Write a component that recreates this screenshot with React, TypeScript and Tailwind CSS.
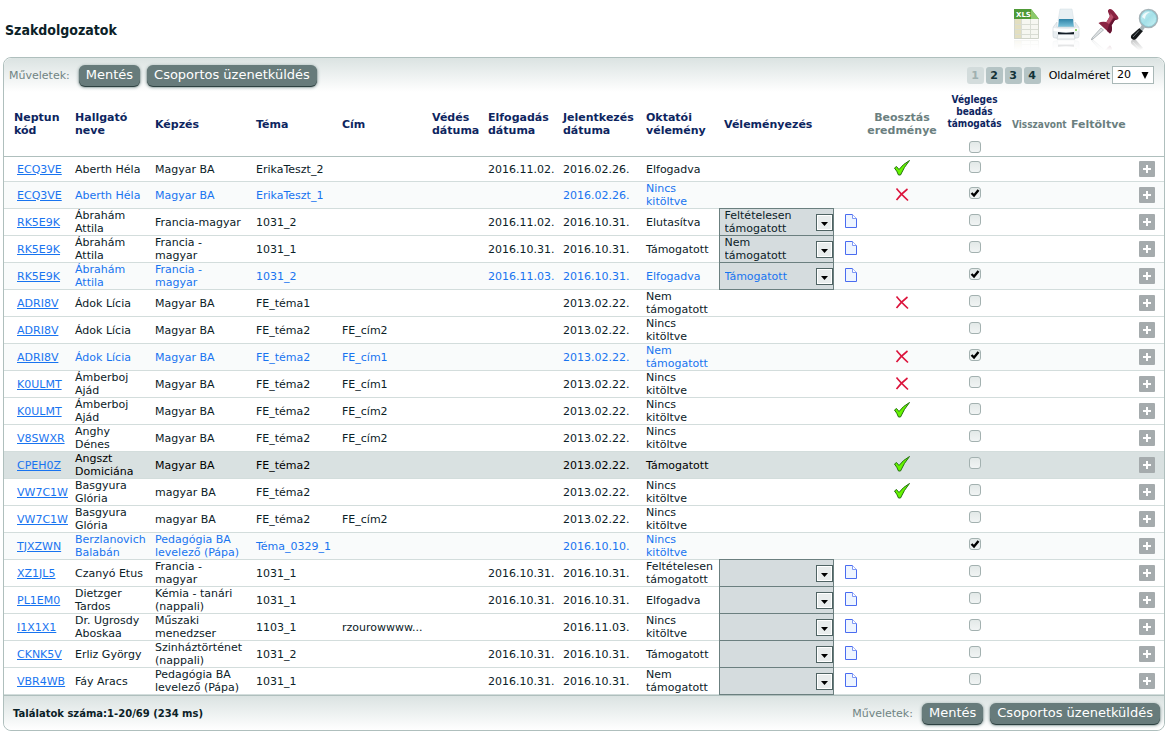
import React from 'react';

type Result = 'ok' | 'no' | '';

type Thesis = {
  code: string;
  name: string;
  training: string;
  topic: string;
  title?: string;
  accepted?: string;
  applied: string;
  opinion: string;
  review?: string; // undefined: not reviewable, '': nothing chosen yet
  result?: Result;
  supported?: boolean;
  hovered?: boolean;
};

const THESES: Thesis[] = [
  { code: 'ECQ3VE', name: 'Aberth Héla', training: 'Magyar BA', topic: 'ErikaTeszt_2', accepted: '2016.11.02.', applied: '2016.02.26.', opinion: 'Elfogadva', result: 'ok' },
  { code: 'ECQ3VE', name: 'Aberth Héla', training: 'Magyar BA', topic: 'ErikaTeszt_1', applied: '2016.02.26.', opinion: 'Nincs\nkitöltve', result: 'no', supported: true },
  { code: 'RK5E9K', name: 'Ábrahám\nAttila', training: 'Francia-magyar', topic: '1031_2', accepted: '2016.11.02.', applied: '2016.10.31.', opinion: 'Elutasítva', review: 'Feltételesen támogatott' },
  { code: 'RK5E9K', name: 'Ábrahám\nAttila', training: 'Francia -\nmagyar', topic: '1031_1', accepted: '2016.10.31.', applied: '2016.10.31.', opinion: 'Támogatott', review: 'Nem támogatott' },
  { code: 'RK5E9K', name: 'Ábrahám\nAttila', training: 'Francia -\nmagyar', topic: '1031_2', accepted: '2016.11.03.', applied: '2016.10.31.', opinion: 'Elfogadva', review: 'Támogatott', supported: true },
  { code: 'ADRI8V', name: 'Ádok Lícia', training: 'Magyar BA', topic: 'FE_téma1', applied: '2013.02.22.', opinion: 'Nem\ntámogatott', result: 'no' },
  { code: 'ADRI8V', name: 'Ádok Lícia', training: 'Magyar BA', topic: 'FE_téma2', title: 'FE_cím2', applied: '2013.02.22.', opinion: 'Nincs\nkitöltve' },
  { code: 'ADRI8V', name: 'Ádok Lícia', training: 'Magyar BA', topic: 'FE_téma2', title: 'FE_cím1', applied: '2013.02.22.', opinion: 'Nem\ntámogatott', result: 'no', supported: true },
  { code: 'K0ULMT', name: 'Ámberboj\nAjád', training: 'Magyar BA', topic: 'FE_téma2', title: 'FE_cím1', applied: '2013.02.22.', opinion: 'Nincs\nkitöltve', result: 'no' },
  { code: 'K0ULMT', name: 'Ámberboj\nAjád', training: 'Magyar BA', topic: 'FE_téma2', title: 'FE_cím2', applied: '2013.02.22.', opinion: 'Nincs\nkitöltve', result: 'ok' },
  { code: 'V8SWXR', name: 'Anghy\nDénes', training: 'Magyar BA', topic: 'FE_téma2', title: 'FE_cím2', applied: '2013.02.22.', opinion: 'Nincs\nkitöltve' },
  { code: 'CPEH0Z', name: 'Angszt\nDomiciána', training: 'Magyar BA', topic: 'FE_téma2', applied: '2013.02.22.', opinion: 'Támogatott', result: 'ok', hovered: true },
  { code: 'VW7C1W', name: 'Basgyura\nGlória', training: 'magyar BA', topic: 'FE_téma2', applied: '2013.02.22.', opinion: 'Nincs\nkitöltve', result: 'ok' },
  { code: 'VW7C1W', name: 'Basgyura\nGlória', training: 'magyar BA', topic: 'FE_téma2', title: 'FE_cím2', applied: '2013.02.22.', opinion: 'Nincs\nkitöltve' },
  { code: 'TJXZWN', name: 'Berzlanovich\nBalabán', training: 'Pedagógia BA\nlevelező (Pápa)', topic: 'Téma_0329_1', applied: '2016.10.10.', opinion: 'Nincs\nkitöltve', supported: true },
  { code: 'XZ1JL5', name: 'Czanyó Etus', training: 'Francia -\nmagyar', topic: '1031_1', accepted: '2016.10.31.', applied: '2016.10.31.', opinion: 'Feltételesen\ntámogatott', review: '' },
  { code: 'PL1EM0', name: 'Dietzger\nTardos', training: 'Kémia - tanári\n(nappali)', topic: '1031_1', accepted: '2016.10.31.', applied: '2016.10.31.', opinion: 'Elfogadva', review: '' },
  { code: 'I1X1X1', name: 'Dr. Ugrosdy\nAboskaa', training: 'Műszaki\nmenedzser', topic: '1103_1', title: 'rzourowwww...', applied: '2016.11.03.', opinion: 'Nincs\nkitöltve', review: '' },
  { code: 'CKNK5V', name: 'Erliz György', training: 'Szinháztörténet\n(nappali)', topic: '1031_2', accepted: '2016.10.31.', applied: '2016.10.31.', opinion: 'Támogatott', review: '' },
  { code: 'VBR4WB', name: 'Fáy Aracs', training: 'Pedagógia BA\nlevelező (Pápa)', topic: '1031_1', accepted: '2016.10.31.', applied: '2016.10.31.', opinion: 'Nem\ntámogatott', review: '' },
];

const REVIEW_OPTIONS = ['', 'Támogatott', 'Feltételesen támogatott', 'Nem támogatott'];

const XlsArt = () => (
  <>
    <path d="M1 1h17l8 10v20H1z" fill="#f6f7f1" />
    <path d="M1 11h7.500v20H1z" fill="#e3dfc0" />
    <path d="M1 1h17l8 10H1z" fill="#4f9a37" />
    <path d="M18 1l8 10H18z" fill="#8cc96a" />
    <path d="M1 16.500h25M1 21.500h25M1 26.500h25M8.500 11v20M17.500 11v20" stroke="#d9ddd4" fill="none" />
    <path d="M1.500 11v19.500h24V11" stroke="#d0d4ca" fill="none" />
  </>
);

const PrinterArt = () => (
  <>
    <path d="M8 1h12l2 12H6z" fill="#e8eff3" stroke="#d3dde2" strokeWidth=".5" />
    <path d="M7 11h14l1 8H6z" fill="url(#blueSheet)" />
    <path d="M5 14l-3 4q-1 1-1 3v7q0 2 2 2h22q2 0 2-2v-7q0-2-1-3l-3-4v5H5z" fill="#e9eef1" stroke="#c9d2d7" strokeWidth=".6" />
    <path d="M1.500 20q12.500 2 25 0v3q-12.500 2-25 0z" fill="#fff" />
    <path d="M6 24q8 1.500 16 0v3H6z" fill="#141d26" />
    <path d="M6 26.500h16l1 4.500H5z" fill="#f9fbfc" stroke="#bcc6cb" strokeWidth=".5" />
    <circle cx="24" cy="22" r="1" fill="#6fc23e" />
  </>
);

const PinArt = () => (
  <>
    <path d="M10 20l2.500 2L2 31 .5 31.500 1 30z" fill="#dfe3e5" stroke="#8d9599" strokeWidth=".6" />
    <path d="M18.500 1q2-.5 4 2l4 5q2 3 0 3.500-2 0-3 1l-3 5q1.500 5-1.500 8L7.500 15q3-2 8-1l3-5q.5-1-1-4t1-4z" fill="#8a2342" />
    <path d="M19.500 5l3 4-4.500 7-3.500-2h1l3.500-6q.5-1 .5-3z" fill="#b8506b" />
    <path d="M26.500 11.500q-2 0-3 1l-3 5q1.500 5-1.500 8l-3-2.500 2-6 5-7z" fill="#641431" />
  </>
);

const MagnifierArt = () => (
  <>
    <path d="M9.500 20l3.500 3-7 8q-2 1.500-4 0t-.5-4z" fill="#15181a" />
    <path d="M9 22.500l-6 6.500" stroke="#70787c" strokeWidth="1" />
    <path d="M12 17l3 2.500-2.500 3.500-3-2.500z" fill="#a9b4b8" />
    <circle cx="18.500" cy="10.500" r="9" fill="url(#lens)" stroke="#a5b3b8" strokeWidth="1.500" />
    <circle cx="18.500" cy="10.500" r="8" fill="none" stroke="#6fbfcc" strokeWidth=".5" />
    <path d="M12 9q2-5 8-5-5 2-5 7z" fill="#fff" opacity=".8" />
  </>
);

type ToolButtonProps = { label: string; tag?: string; children: React.ReactNode };

// Draws an icon and its fading mirror image underneath
const ToolButton = ({ label, tag, children }: ToolButtonProps) => (
  <button type="button" aria-label={label} className="cursor-pointer">
    <svg width="30" height="44" viewBox="0 0 30 44" className="block">
      <defs>
        <linearGradient id="blueSheet" x1="0" y1="0" x2="0" y2="1">
          <stop offset="0" stopColor="#2f83a8" />
          <stop offset="1" stopColor="#7cc4dc" />
        </linearGradient>
        <linearGradient id="lens" x1="0" y1="0" x2="1" y2="1">
          <stop offset="0" stopColor="#d5f3f7" />
          <stop offset=".5" stopColor="#a4e0e8" />
          <stop offset="1" stopColor="#d0f5f6" />
        </linearGradient>
        <linearGradient id="fade" x1="0" y1="0" x2="0" y2="1">
          <stop offset="0" stopColor="#fff" stopOpacity=".75" />
          <stop offset="1" stopColor="#fff" />
        </linearGradient>
      </defs>
      <g transform="translate(0 63) scale(1 -1)">{children}</g>
      <rect y="31.500" width="30" height="11" fill="url(#fade)" />
      <rect y="42" width="30" height="2" fill="#fff" />
      {children}
      {tag && (
        <text x="3" y="9" fontSize="7" fontWeight="700" fill="#fff">{tag}</text>
      )}
    </svg>
  </button>
);

const ActionButton = ({ children }: { children: string }) => (
  <button
    type="button"
    className="h-[21px] cursor-pointer rounded-md bg-[#677b7b] px-[7px] text-[13px] leading-5 text-white shadow-[0_1px_1px_#1f3333,0_1px_3px_1px_#a9b8b7]"
  >
    {children}
  </button>
);

const Actions = () => (
  <div className="flex items-center gap-[7px]">
    <span className="mr-[2px] text-[11px] text-[#708483]">Műveletek:</span>
    <ActionButton>Mentés</ActionButton>
    <ActionButton>Csoportos üzenetküldés</ActionButton>
  </div>
);

const CheckBox = ({ label, checked = false }: { label: string; checked?: boolean }) => (
  <span className="inline-grid align-top">
    <input
      type="checkbox"
      aria-label={label}
      defaultChecked={checked}
      className="peer size-3 appearance-none rounded-[3px] border border-[#a3b1b0] bg-linear-to-b from-[#e3e9e8] to-[#f1f4f4] [grid-area:1/1]"
    />
    <svg width="12" height="12" viewBox="0 0 12 12" className="pointer-events-none hidden [grid-area:1/1] peer-checked:block">
      <path d="M2.500 6l2.500 2.500 4.500-5.500" stroke="#000" strokeWidth="2.400" fill="none" />
    </svg>
  </span>
);

const ResultIcon = ({ result }: { result?: Result }) => {
  if (result === 'ok') {
    return (
      <svg width="18" height="18" viewBox="0 0 18 18" role="img" aria-label="Elfogadva" className="mx-auto block">
        <path d="M1.500 9l2-1.500L6 10.500Q10 5 16.500 1.500 11 8 7.500 16H5.500Q4 12 1.500 9z" fill="#66f500" stroke="#24730f" />
      </svg>
    );
  }
  if (result === 'no') {
    return (
      <svg width="18" height="18" viewBox="0 0 18 18" role="img" aria-label="Elutasítva" className="mx-auto block">
        <path d="M3.500 3.500Q7 8 15 15.500M14.500 4Q8 9 3.500 15" stroke="#dc143c" strokeWidth="1.600" fill="none" />
      </svg>
    );
  }
  return null;
};

const ReviewSelect = ({ code, value }: { code: string; value: string }) => (
  <div className="relative">
    <select
      aria-label={`Véleményezés ${code}`}
      defaultValue={value}
      className="block h-[26px] w-full appearance-none whitespace-normal bg-[#d5dcde] pl-[5px] pr-6 text-[11px] leading-[13px]"
    >
      {REVIEW_OPTIONS.map((o) => (
        <option key={o}>{o}</option>
      ))}
    </select>
    <svg width="17" height="17" viewBox="0 0 17 17" className="pointer-events-none absolute right-0 bottom-1">
      <rect x=".5" y=".5" width="16" height="16" fill="#fff" stroke="#4f6363" />
      <rect x="2" y="2" width="13" height="13" fill="#e9eded" />
      <path d="M5 8h7l-3.500 4z" fill="#000" />
    </svg>
  </div>
);

const DocIcon = () => (
  <svg width="12" height="14" viewBox="0 0 12 14">
    <path d="M.5.5h7l4 4v9H.5z" fill="#eef5ff" stroke="#4a6cf0" />
    <path d="M7.500.5v4h4" fill="#fff" stroke="#7d97f5" />
  </svg>
);

const PlusIcon = () => (
  <svg width="16" height="16" viewBox="0 0 16 16" className="block">
    <rect width="16" height="16" rx="1" fill="#a5abad" />
    <path d="M8 4v8M4 8h8" stroke="#fff" strokeWidth="2" />
  </svg>
);

const ThesisRow = ({ row }: { row: Thesis }) => {
  let tone = 'text-[#0b2127]';
  if (row.hovered) tone = 'bg-[#d9e1e1] text-black';
  else if (row.supported) tone = 'bg-[#f9fbfb] text-[#1874f0]';

  return (
    <tr className={`h-[27px] border-b border-[#d3dddc] whitespace-pre first:h-[25px] ${tone}`}>
      <td className="pl-[13px]">
        <a href="#" className="text-[#1874f0] underline">{row.code}</a>
      </td>
      <td className="pl-[3px]">{row.name}</td>
      <td className="pl-[3px]">{row.training}</td>
      <td className="pl-[3px]">{row.topic}</td>
      <td className="pl-[3px]">{row.title}</td>
      <td />
      <td className="pl-[3px]">{row.accepted}</td>
      <td className="pl-[3px]">{row.applied}</td>
      <td className="pl-[3px]">{row.opinion}</td>
      {row.review === undefined ? (
        <td />
      ) : (
        <td className="border border-[#6b7f7f]">
          <ReviewSelect code={row.code} value={row.review} />
        </td>
      )}
      <td className="pb-[2px] pl-[11px]">
        {row.review !== undefined && (
          <button type="button" aria-label="Dokumentum" className="block cursor-pointer">
            <DocIcon />
          </button>
        )}
      </td>
      <td className="pb-[2px]">
        <ResultIcon result={row.result} />
      </td>
      <td className="pb-[3px] text-center">
        <CheckBox label={`Végleges beadás támogatás ${row.code}`} checked={row.supported} />
      </td>
      <td />
      <td />
      <td className="pl-px">
        <button type="button" aria-label="Lehetőségek" className="block cursor-pointer">
          <PlusIcon />
        </button>
      </td>
    </tr>
  );
};

const Pager = () => (
  <div className="flex items-center">
    <nav className="flex gap-[2px] text-center text-[11px] leading-[17px] font-bold text-[#123138]">
      <span className="w-[17px] rounded-[3px] bg-[#d3dcdc] text-[#9fb0b0]">1</span>
      {[2, 3, 4].map((n) => (
        <a key={n} href="#" className="w-[17px] rounded-[3px] bg-[#b5c4c5]">{n}</a>
      ))}
    </nav>
    <label htmlFor="pageSize" className="mr-[2px] ml-2 text-[11px] text-black">Oldalméret</label>
    <span className="relative">
      <select id="pageSize" className="block h-[18px] w-[42px] appearance-none border border-[#a9b8b7] bg-white pl-1 text-[11px] leading-4 text-black">
        <option>20</option>
        <option>50</option>
        <option>100</option>
      </select>
      <svg width="8" height="7" viewBox="0 0 8 7" className="pointer-events-none absolute top-[6px] right-[5px]">
        <path d="M.5 0h7L4 7z" fill="#000" />
      </svg>
    </span>
  </div>
);

export default function App() {
  return (
    <main className="bg-white pr-px pb-1 pl-[3px] font-['DejaVu_Sans',Verdana,sans-serif] text-[11px] leading-[13px] text-[#0b2127]">
      <header className="flex h-[57px] justify-between pt-2 pr-[5px] pl-[2px]">
        <h1 className="pt-3 font-['DejaVu_Sans_Condensed','DejaVu_Sans',sans-serif] text-[14px] leading-5 font-bold">Szakdolgozatok</h1>
        <div className="flex items-start gap-[9px]">
          <ToolButton label="Exportálás Excelbe" tag="XLS"><XlsArt /></ToolButton>
          <ToolButton label="Nyomtatás"><PrinterArt /></ToolButton>
          <ToolButton label="Rögzítés"><PinArt /></ToolButton>
          <ToolButton label="Keresés"><MagnifierArt /></ToolButton>
        </div>
      </header>

      <section className="rounded-lg border border-[#afbfbd] bg-white">
        <div className="flex h-[34px] items-center justify-between rounded-t-lg bg-linear-to-b from-[#dbe3e2] to-white pr-[10px] pl-[5px]">
          <Actions />
          <Pager />
        </div>

        <table className="w-full table-fixed border-collapse">
          <colgroup>
            <col className="w-[68px]" />
            <col className="w-[80px]" />
            <col className="w-[101px]" />
            <col className="w-[86px]" />
            <col className="w-[90px]" />
            <col className="w-[56px]" />
            <col className="w-[75px]" />
            <col className="w-[83px]" />
            <col className="w-[76px]" />
            <col className="w-[114px]" />
            <col className="w-[34px]" />
            <col className="w-[70px]" />
            <col className="w-[75px]" />
            <col className="w-[58px]" />
            <col className="w-[68px]" />
            <col />
          </colgroup>
          <thead>
            <tr className="h-[64px] border-b border-[#afbfbd] text-left whitespace-pre text-[#0d2560]">
              <th className="pl-[10px]">{'Neptun\nkód'}</th>
              <th className="pl-[3px]">{'Hallgató\nneve'}</th>
              <th className="pl-[3px]">Képzés</th>
              <th className="pl-[3px]">Téma</th>
              <th className="pl-[3px]">Cím</th>
              <th className="pl-[3px]">{'Védés\ndátuma'}</th>
              <th className="pl-[3px]">{'Elfogadás\ndátuma'}</th>
              <th className="pl-[3px]">{'Jelentkezés\ndátuma'}</th>
              <th className="pl-[3px]">{'Oktatói\nvélemény'}</th>
              <th className="pl-[5px]">Véleményezés</th>
              <th />
              <th className="text-center text-[#6b7f7f]">{'Beosztás\neredménye'}</th>
              <th className="pt-[2px] text-center font-['DejaVu_Sans_Condensed','DejaVu_Sans',sans-serif] text-[10px] leading-3">
                {'Végleges\nbeadás\ntámogatás'}
                <div className="pt-[11px] pb-[3px]">
                  <CheckBox label="Összes kijelölése" />
                </div>
              </th>
              <th className="font-['DejaVu_Sans_Condensed','DejaVu_Sans',sans-serif] text-[10px] text-[#6b7f7f]">Visszavont</th>
              <th className="pl-px text-[#6b7f7f]">Feltöltve</th>
              <th />
            </tr>
          </thead>
          <tbody>
            {THESES.map((row, i) => (
              <ThesisRow key={i} row={row} />
            ))}
          </tbody>
        </table>

        <footer className="flex h-[35px] items-center justify-between rounded-b-lg border-t border-[#afbfbd] bg-linear-to-b from-[#dbe3e2] to-white pr-1 pl-[9px]">
          <span className="text-[10px] font-bold">Találatok száma:1-20/69 (234 ms)</span>
          <Actions />
        </footer>
      </section>
    </main>
  );
}
